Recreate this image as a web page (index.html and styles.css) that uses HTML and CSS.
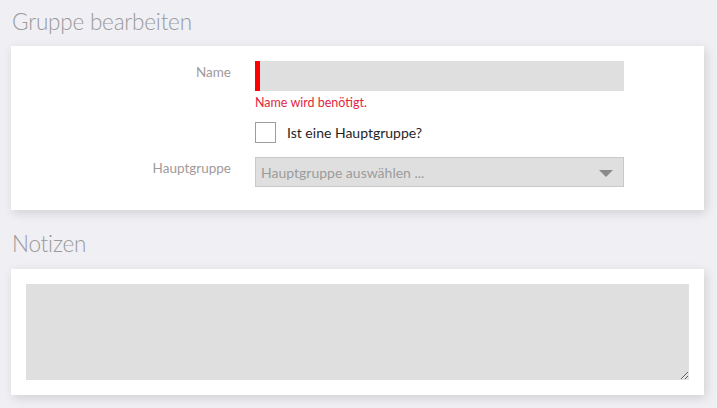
FILE: index.html
```html
<!DOCTYPE html>
<html lang="de">
<head>
<meta charset="utf-8">
<title>Gruppe bearbeiten</title>
<link rel="stylesheet" href="styles.css">
</head>
<body>
<main class="page">
  <h1 class="section-title">Gruppe bearbeiten</h1>
  <section class="card form-card">
    <div class="form-grid">
      <label class="field-label" for="name">Name</label>
      <div class="field">
        <input id="name" class="text-input invalid" type="text">
        <div class="error">Name wird benötigt.</div>
      </div>

      <div></div>
      <label class="check-row">
        <span class="checkbox"></span>
        <span class="check-text">Ist eine Hauptgruppe?</span>
      </label>

      <label class="field-label" for="parent">Hauptgruppe</label>
      <div class="field">
        <div class="select" id="parent">
          <span class="placeholder">Hauptgruppe auswählen ...</span>
          <span class="arrow"></span>
        </div>
      </div>
    </div>
  </section>

  <h2 class="section-title second">Notizen</h2>
  <section class="card notes-card">
    <textarea class="notes"></textarea>
  </section>
</main>
</body>
</html>
```

FILE: styles.css
```css
html, body {
  margin: 0;
  padding: 0;
  background: #efeff4;
  font-family: "Lato", "Open Sans", sans-serif;
}

.page {
  padding: 0 13px 13px 11px;
}

.section-title {
  margin: 0;
  font-weight: 300;
  font-size: 22.5px;
  color: #9a9a9a;
  line-height: 28px;
  padding: 8px 0 10px 1px;
  letter-spacing: -0.2px;
}

.section-title.second {
  padding: 20px 0 11px 1px;
}

.card {
  background: #fff;
  box-shadow: 2px 3px 10px rgba(0, 0, 0, 0.13);
}

.form-card {
  padding: 15px 0 23px 0;
}

.form-grid {
  display: grid;
  grid-template-columns: 220px 369px;
  column-gap: 24px;
  row-gap: 14px;
  align-items: start;
}

.field-label {
  text-align: right;
  font-size: 13.5px;
  color: #a29a9a;
  line-height: 30px;
  height: 30px;
  margin-top: -4px;
}

.field {
  display: flex;
  flex-direction: column;
}

.text-input {
  box-sizing: border-box;
  height: 30px;
  width: 369px;
  border: none;
  background: #dfdfdf;
  margin: 0;
  padding: 0 8px;
  outline: none;
}

.text-input.invalid {
  border-left: 5px solid #ff0000;
}

.error {
  margin-top: 3px;
  font-size: 12.5px;
  line-height: 17px;
  color: #e2273f;
}

.check-row {
  display: flex;
  align-items: center;
  gap: 11px;
  height: 20px;
  margin-top: -3px;
  margin-bottom: 1px;
}

.checkbox {
  box-sizing: border-box;
  width: 21px;
  height: 21px;
  border: 1px solid #9d9d9d;
  background: #fff;
}

.check-text {
  font-size: 14px;
  color: #1f1f1f;
}

.select {
  box-sizing: border-box;
  height: 30px;
  width: 369px;
  background: #dfdfdf;
  border: 1px solid #c9c9c9;
  display: flex;
  align-items: center;
  justify-content: space-between;
  padding: 0 10px 0 5px;
}

.placeholder {
  font-size: 14px;
  color: #9c9c9c;
}

.arrow {
  width: 0;
  height: 0;
  border-left: 7px solid transparent;
  border-right: 7px solid transparent;
  border-top: 7px solid #8a8a8a;
  margin-top: 2px;
}

.notes-card {
  padding: 15px;
}

.notes {
  display: block;
  box-sizing: border-box;
  width: 100%;
  height: 96px;
  border: none;
  background: #dfdfdf;
  margin: 0;
  outline: none;
  resize: vertical;
}
```
